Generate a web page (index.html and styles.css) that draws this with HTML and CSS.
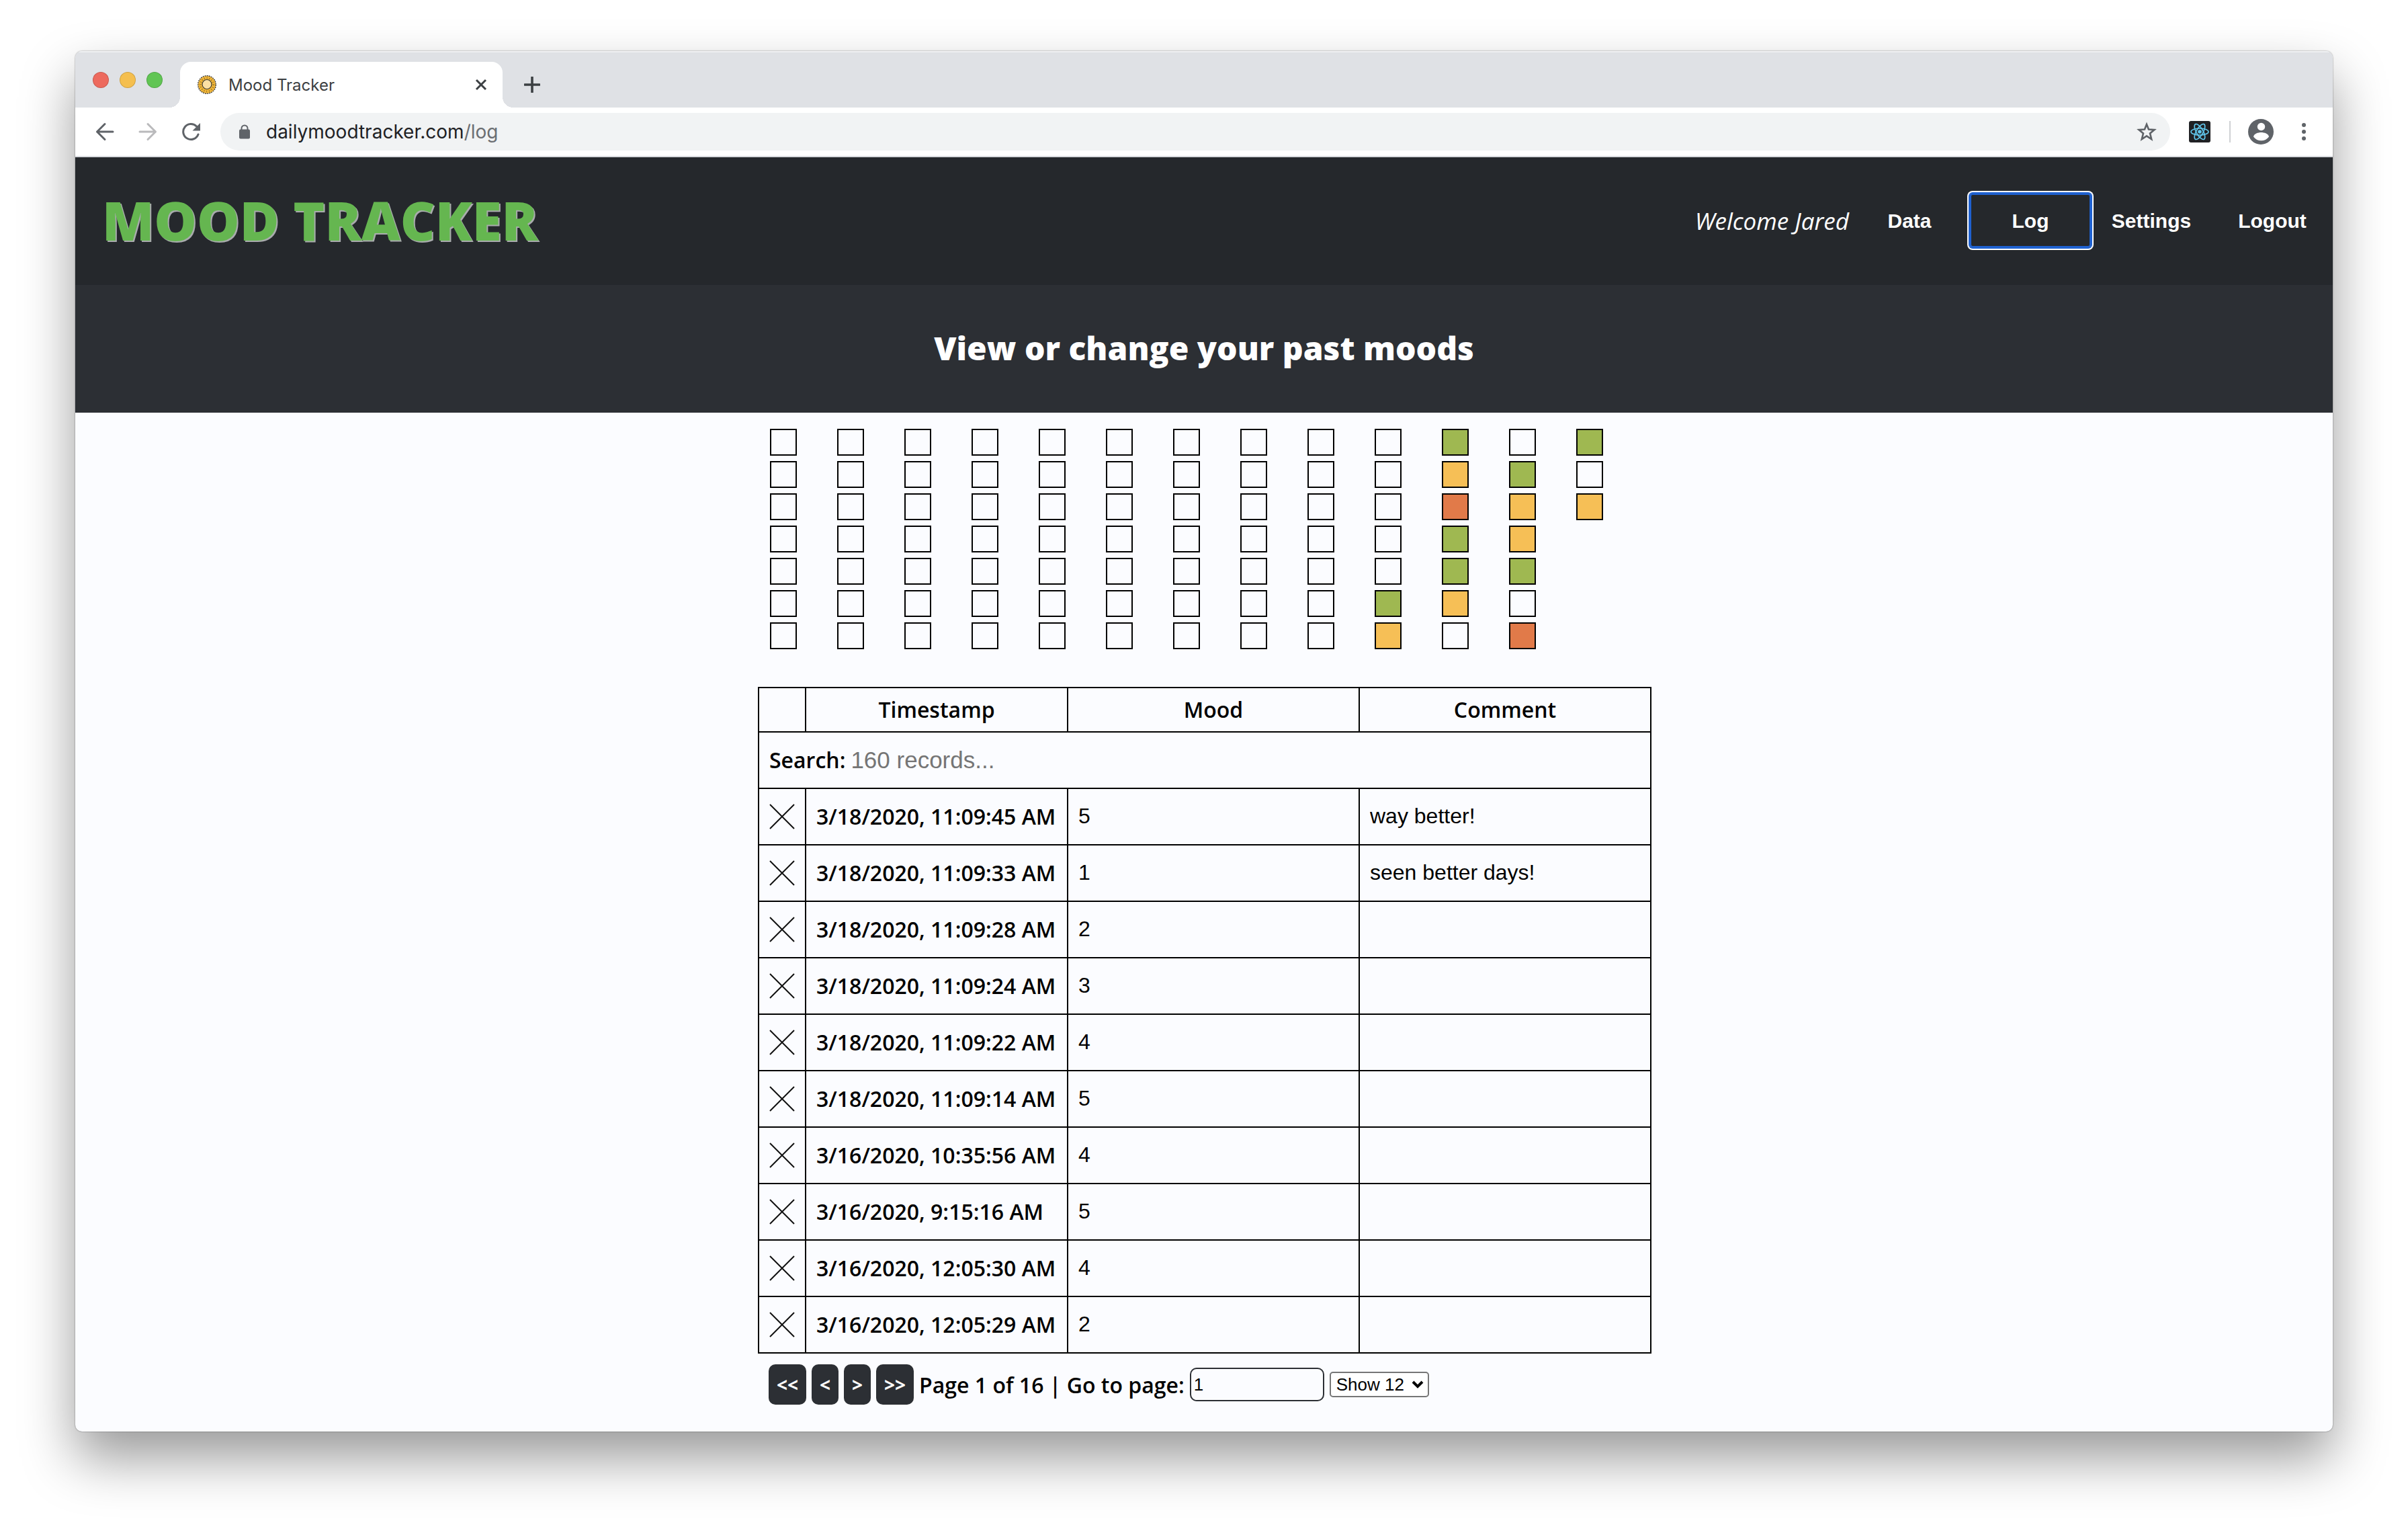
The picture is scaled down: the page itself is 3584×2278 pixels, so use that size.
FILE: index.html
```html
<!DOCTYPE html>
<html lang="en">
<head>
<meta charset="utf-8">
<title>Mood Tracker</title>
<link rel="stylesheet" href="styles.css">
</head>
<body>
<div class="window">
  <div class="tabstrip">
    <div class="lights"><span class="light red"></span><span class="light amber"></span><span class="light green"></span></div>
    <div class="tab">
      <svg class="favicon" viewBox="0 0 28 28"><circle cx="14" cy="14" r="13" fill="#efb437"/><circle cx="14" cy="14" r="13.300" fill="none" stroke="#3c3a34" stroke-width="1.400" stroke-dasharray="1.900 1.200"/><circle cx="14" cy="14" r="9.800" fill="none" stroke="#7a6124" stroke-width="2.400" stroke-dasharray=".8 3"/><circle cx="14" cy="13.500" r="7" fill="#fce0a4" stroke="#3c3a34" stroke-width="1.200"/></svg>
      <span class="tab-title">Mood Tracker</span>
      <button class="icon-btn" aria-label="Close tab"><svg width="20" height="20" viewBox="0 0 20 20"><path d="M3 3L17 17M17 3L3 17" stroke="#3c4043" stroke-width="3"/></svg></button>
    </div>
    <button class="icon-btn new-tab" aria-label="New tab"><svg width="24" height="24" viewBox="0 0 24 24"><path d="M12 1V23M1 12H23" stroke="#3c4043" stroke-width="3.6" stroke-linecap="round"/></svg></button>
  </div>
  <div class="toolbar">
    <button class="icon-btn" aria-label="Back"><svg width="28" height="28" viewBox="0 0 28 28"><path d="M26 14H2.500M14 2.500L2.500 14L14 25.500" fill="none" stroke="#5f6368" stroke-width="3" stroke-linecap="round" stroke-linejoin="round"/></svg></button>
    <button class="icon-btn" aria-label="Forward"><svg width="28" height="28" viewBox="0 0 28 28"><path d="M2 14H25.500M14 2.500L25.500 14L14 25.500" fill="none" stroke="#bababc" stroke-width="3" stroke-linecap="round" stroke-linejoin="round"/></svg></button>
    <button class="icon-btn" aria-label="Reload"><svg width="28" height="28" viewBox="0 0 28 28"><path d="M25 18A11.500 11.500 0 1 1 22.500 6" fill="none" stroke="#5f6368" stroke-width="3" stroke-linecap="round"/><path d="M28 1V12.500H16.500Z" fill="#5f6368"/></svg></button>
    <div class="omnibox">
      <svg width="16" height="22" viewBox="0 0 16 22"><path d="M3.500 9V6a4.500 4.500 0 0 1 9 0V9" fill="none" stroke="#5f6368" stroke-width="2"/><rect y="7.500" width="16" height="14" rx="2" fill="#5f6368"/></svg>
      <span class="url">dailymoodtracker.com<span class="path">/log</span></span>
      <button class="icon-btn" aria-label="Bookmark"><svg width="30" height="30" viewBox="0 0 30 30"><path d="M15 4L18 11.500L26.500 12.100L20 17.400L22.200 26L15 21.300L7.800 26L10 17.400L3.500 12.100L12 11.500Z" fill="none" stroke="#5f6368" stroke-width="2.600"/></svg></button>
    </div>
    <button class="icon-btn" aria-label="React extension"><svg width="32" height="32" viewBox="0 0 32 32"><rect width="32" height="32" rx="3" fill="#202124"/><g fill="none" stroke="#61c8ee" stroke-width="1.600"><ellipse cx="16" cy="16" rx="13" ry="5"/><ellipse cx="16" cy="16" rx="13" ry="5" transform="rotate(60 16 16)"/><ellipse cx="16" cy="16" rx="13" ry="5" transform="rotate(120 16 16)"/></g><circle cx="16" cy="16" r="2.800" fill="#61c8ee"/></svg></button>
    <span class="divider"></span>
    <button class="icon-btn" aria-label="Profile"><svg width="38" height="38" viewBox="0 0 38 38"><circle cx="19" cy="19" r="19" fill="#5f6368"/><circle cx="19.500" cy="11.500" r="5.700" fill="#fff"/><path d="M8 26.500C8.500 22 15 20 19.500 20S30.500 22 31 26.500C28 30.500 24 32.300 19.500 32.300S11 30.500 8 26.500Z" fill="#fff"/></svg></button>
    <button class="icon-btn" aria-label="Menu"><svg width="6" height="28" viewBox="0 0 6 28"><g fill="#5f6368"><circle cx="3" cy="4" r="3"/><circle cx="3" cy="14" r="3"/><circle cx="3" cy="24" r="3"/></g></svg></button>
  </div>
  <header class="site-header">
    <h1>MOOD TRACKER</h1>
    <nav>
      <em>Welcome Jared</em>
      <button class="nav-btn">Data</button>
      <button class="nav-btn current">Log</button>
      <button class="nav-btn">Settings</button>
      <button class="nav-btn">Logout</button>
    </nav>
  </header>
  <div class="subheader"><h2>View or change your past moods</h2></div>
  <main>
    <div class="log">
      <div class="calendar" id="calendar"></div>
      <table>
        <colgroup><col class="c-del"><col class="c-time"><col class="c-val"><col class="c-val"></colgroup>
        <thead>
          <tr><th></th><th>Timestamp</th><th>Mood</th><th>Comment</th></tr>
          <tr class="search"><th colspan="4"><div class="search-row"><label for="search">Search:</label><input id="search" placeholder="160 records..."></div></th></tr>
        </thead>
        <tbody id="rows"></tbody>
      </table>
      <div class="pager">
        <button>&lt;&lt;</button><button>&lt;</button><button>&gt;</button><button>&gt;&gt;</button>
        <label for="page">Page 1 of 16 | Go to page:</label>
        <input id="page" value="1">
        <div class="select-wrap">
          <select aria-label="Rows per page"><option>Show 12</option></select>
          <svg class="chevron" width="18" height="14" viewBox="0 0 18 14"><path d="M2 3L9 10L16 3" fill="none" stroke="#000" stroke-width="4"/></svg>
        </div>
      </div>
    </div>
  </main>
</div>
<script src="script.js"></script>
</body>
</html>
```

FILE: styles.css
```css
* { box-sizing: border-box; }
body {
  margin: 0;
  padding: 76px 112px 148px;
  background: #fff;
  color: #000;
  font-family: "Open Sans", sans-serif;
  font-size: 32px;
}
button { border: 0; background: none; padding: 0; font: inherit; color: inherit; }
.window {
  border-radius: 10px;
  background: #fbfcff;
  overflow: hidden;
  box-shadow: 0 0 2px rgba(0, 0, 0, .5), 0 40px 80px rgba(0, 0, 0, .4);
}
.icon-btn { display: flex; align-items: center; justify-content: center; }
.tabstrip {
  display: flex;
  align-items: flex-end;
  height: 84px;
  background: #dfe1e5;
  box-shadow: inset 0 2px #eff0f2;
}
.lights { display: flex; gap: 16px; width: 156px; padding: 2px 26px 0; align-self: center; }
.light { width: 24px; height: 24px; border-radius: 50%; border: 1px solid rgba(0, 0, 0, .15); }
.red { background: #ed6a5e; }
.amber { background: #f5bf4f; }
.green { background: #61c554; }
.tab {
  position: relative;
  display: flex;
  align-items: center;
  width: 480px;
  height: 68px;
  padding: 0 22px 0 26px;
  background: #fff;
  border-radius: 16px 16px 0 0;
}
.tab::before, .tab::after {
  content: "";
  position: absolute;
  bottom: 0;
  width: 16px;
  height: 16px;
}
.tab::before { left: -16px; background: radial-gradient(circle at 0 0, transparent 16px, #fff 16px); }
.tab::after { right: -16px; background: radial-gradient(circle at 100% 0, transparent 16px, #fff 16px); }
.favicon { width: 28px; height: 28px; overflow: visible; }
.tab-title { flex: 1; padding-left: 18px; font: 24px Inter, sans-serif; color: #3c4043; }
.new-tab { height: 68px; margin-left: 32px; }
.toolbar {
  display: flex;
  align-items: center;
  height: 74px;
  padding: 0 40px 0 30px;
  border-bottom: 2px solid #d8dade;
  background: #fff;
}
.toolbar > .icon-btn + .icon-btn { margin-left: 36px; }
.toolbar > .divider + .icon-btn { margin-right: 6px; }
.omnibox {
  flex: 1;
  display: flex;
  align-items: center;
  height: 56px;
  margin: 0 28px 0 30px;
  padding: 0 20px 0 28px;
  border-radius: 28px;
  background: #f1f3f4;
}
.url { flex: 1; padding-left: 24px; font: 28px Inter, sans-serif; color: #202124; }
.path { color: #6b6e72; }
.divider { width: 2px; height: 32px; margin: 0 26px 0 28px; background: #cfd1d4; }
.site-header {
  display: flex;
  align-items: center;
  justify-content: space-between;
  height: 190px;
  padding: 0 0 2px 40px;
  background: #25282c;
  color: #fff;
}
h1 {
  margin: 0;
  padding-bottom: 2px;
  font-size: 80px;
  font-weight: 800;
  line-height: 110px;
  color: #65b650;
  text-shadow: 2px 2px #a9abad;
}
nav { display: flex; align-items: center; font-size: 35px; }
.nav-btn { width: 180px; height: 80px; padding-top: 2px; font: bold 30px "Liberation Sans", sans-serif; }
.current { border-radius: 4px; box-shadow: inset 0 0 0 2px #1f61d0, 0 0 0 2px #1f61d0, 0 0 0 4px #fff; }
.subheader {
  display: flex;
  align-items: center;
  justify-content: center;
  height: 190px;
  padding-bottom: 2px;
  background: #2c2f34;
  color: #fff;
}
h2 { margin: 0; font-size: 48px; font-weight: 800; line-height: 66px; }
main { display: flex; justify-content: center; padding-bottom: 24px; }
.log { width: 1330px; margin-left: 2px; }
.calendar { display: flex; gap: 60px; padding: 24px 18px 56px; }
.week { display: flex; flex-direction: column; gap: 8px; }
.day { width: 40px; height: 40px; border: 2px solid #000; }
.good { background: #9fb851; }
.okay { background: #f6bf56; }
.poor { background: #e17a49; }
table { width: 100%; table-layout: fixed; border-collapse: collapse; }
.c-del { width: 70px; }
.c-time { width: 390px; }
th, td { border: 2px solid #000; padding: 0 15px; text-align: left; font-size: 32px; font-weight: 600; line-height: 44px; white-space: nowrap; }
thead th { height: 66px; text-align: center; }
tbody tr, .search th { height: 84px; }
.search-row { display: flex; align-items: center; gap: 8px; }
.search-row input { flex: 1; padding: 0; border: 0; background: none; font: 35px "Liberation Sans", sans-serif; }
.search-row input::placeholder { color: #757575; }
.cell-input { display: block; width: 100%; padding: 0 0 2px; border: 0; background: none; font: 32px "Liberation Sans", sans-serif; }
.delete, .delete svg { display: block; }
.pager { display: flex; align-items: center; gap: 8px; padding: 16px; font-weight: 600; font-size: 32px; }
.pager button { height: 60px; padding: 0 12px; border-radius: 10px; background: #2c2f34; color: #fff; font-size: 28px; font-weight: 700; }
.pager input { width: 200px; height: 50px; padding: 0 4px; border: 2px solid #2c2f34; border-radius: 10px; background: none; font: 26px "Liberation Sans", sans-serif; }
.select-wrap { position: relative; display: flex; }
.pager select { appearance: none; width: 148px; height: 38px; padding: 0 8px; border: 2px solid #767676; border-radius: 5px; background: #fff; color: #000; font: 26px "Liberation Sans", sans-serif; }
.chevron { position: absolute; right: 8px; top: 12px; pointer-events: none; }
```

FILE: script.js
```js
// One string per week; "." is a day without a record.
const weeks = [
  ".......", ".......", ".......", ".......", ".......", ".......", ".......", ".......", ".......",
  ".....go", "gopggo.", ".goog.p", "g.o"
];
const moods = { g: "good", o: "okay", p: "poor" };
document.getElementById("calendar").innerHTML = weeks.map(week =>
  `<div class="week">${[...week].map(d => `<span class="day ${moods[d] || ""}"></span>`).join("")}</div>`
).join("");

const records = [
  ["3/18/2020, 11:09:45 AM", 5, "way better!"],
  ["3/18/2020, 11:09:33 AM", 1, "seen better days!"],
  ["3/18/2020, 11:09:28 AM", 2, ""],
  ["3/18/2020, 11:09:24 AM", 3, ""],
  ["3/18/2020, 11:09:22 AM", 4, ""],
  ["3/18/2020, 11:09:14 AM", 5, ""],
  ["3/16/2020, 10:35:56 AM", 4, ""],
  ["3/16/2020, 9:15:16 AM", 5, ""],
  ["3/16/2020, 12:05:30 AM", 4, ""],
  ["3/16/2020, 12:05:29 AM", 2, ""]
];
document.getElementById("rows").innerHTML = records.map(([time, mood, comment]) => `
  <tr>
    <td><button class="delete" aria-label="Delete ${time}"><svg width="38" height="38" viewBox="0 0 38 38"><path d="M1 1L37 37M37 1L1 37" stroke="#111" stroke-width="2"/></svg></button></td>
    <td>${time}</td>
    <td><input class="cell-input" aria-label="Mood" value="${mood}"></td>
    <td><input class="cell-input" aria-label="Comment" value="${comment}"></td>
  </tr>`).join("");
```
